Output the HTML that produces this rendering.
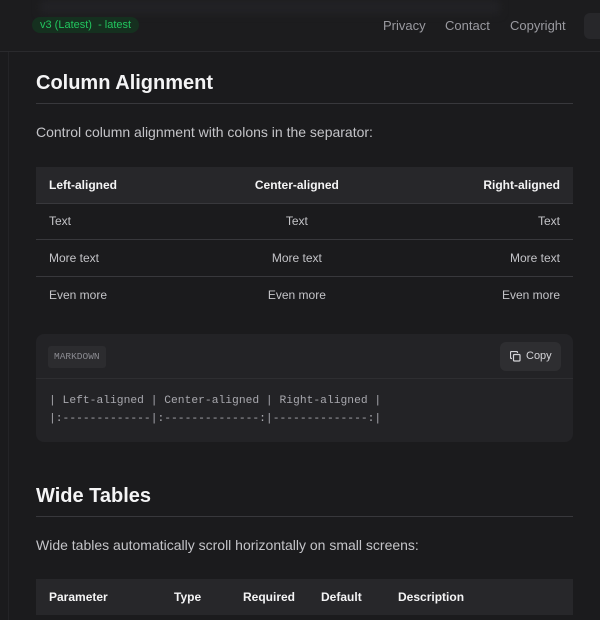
<!DOCTYPE html>
<html><head><style>
*{box-sizing:border-box;margin:0;padding:0}
body{width:600px;height:620px;overflow:hidden;background:#1b1b1d;font-family:"Liberation Sans",sans-serif;color:#d4d4d8;position:relative}
.side{position:absolute;left:8px;top:0;bottom:0;border-left:1px solid #242427}
.top{position:absolute;left:0;top:0;width:600px;height:52px;border-bottom:1px solid #2a2a2d;background:#1c1c1e}
.blur{position:absolute;top:0;left:40px;width:460px;height:14px;background:#222225;filter:blur(4px)}
.badge{position:absolute;left:32px;top:17px;height:16px;padding:0 8px;border-radius:8px;background:#15301f;color:#22c55e;font-size:11px;line-height:16px}
.nav{position:absolute;top:18px;font-size:13px;color:#9a9aa0}
.btn{position:absolute;left:584px;top:13px;width:40px;height:26px;border-radius:6px;background:#27272a}
h2{position:absolute;left:36px;font-size:20px;font-weight:bold;color:#f4f4f5;width:537px;border-bottom:1px solid #38383c;padding-bottom:8px}
p{position:absolute;left:36px;font-size:14px;color:#c4c4c8}
table{position:absolute;left:36px;width:537px;border-collapse:collapse;font-size:12px}
th{background:#27272a;height:36px;color:#f4f4f5;font-size:12px;font-weight:bold;padding:0 13px}
td{height:36.5px;border-top:1px solid #38383c;padding:0 13px;color:#c4c4c8}
.code{position:absolute;left:36px;top:334px;width:537px;height:108px;background:#232326;border-radius:8px}
.ch{height:45px;border-bottom:1px solid #2e2e31;position:relative}
.lang{position:absolute;left:12px;top:12px;height:22px;padding:0 6px;background:#2c2c2f;border-radius:3px;font-family:"Liberation Mono",monospace;font-size:9.5px;line-height:22px;color:#8a8a90}
.copy{position:absolute;right:12px;top:8px;width:61px;height:29px;background:#2e2e31;border-radius:6px;font-size:11px;color:#d4d4d8;line-height:29px;padding-left:26px}
pre{font-family:"Liberation Mono",monospace;font-size:11.3px;line-height:18px;color:#a8a8ae;padding:13px 13px}
</style></head><body>
<div class="side"></div>
<div class="top"><div class="blur"></div>
<div class="badge">v3 (Latest)&nbsp; - latest</div>
<div class="nav" style="left:383px">Privacy</div>
<div class="nav" style="left:445px">Contact</div>
<div class="nav" style="left:510px">Copyright</div>
<div class="btn"></div></div>
<h2 style="top:72px">Column Alignment</h2>
<p style="top:124px">Control column alignment with colons in the separator:</p>
<table style="top:167px">
<tr><th style="text-align:left">Left-aligned</th><th style="text-align:center">Center-aligned</th><th style="text-align:right">Right-aligned</th></tr>
<tr><td>Text</td><td style="text-align:center">Text</td><td style="text-align:right">Text</td></tr>
<tr><td>More text</td><td style="text-align:center">More text</td><td style="text-align:right">More text</td></tr>
<tr><td>Even more</td><td style="text-align:center">Even more</td><td style="text-align:right">Even more</td></tr>
</table>
<div class="code"><div class="ch"><div class="lang">MARKDOWN</div>
<div class="copy"><svg style="position:absolute;left:10px;top:9px" width="11" height="11" viewBox="0 0 11 11" fill="none" stroke="#d4d4d8" stroke-width="1.2"><rect x="3.5" y="3.5" width="6.5" height="6.5" rx="1"/><path d="M2 7.5H1.5a1 1 0 0 1-1-1V1.5a1 1 0 0 1 1-1h5a1 1 0 0 1 1 1V2"/></svg>Copy</div></div>
<pre>| Left-aligned | Center-aligned | Right-aligned |
|:-------------|:--------------:|--------------:|</pre></div>
<h2 style="top:485px">Wide Tables</h2>
<p style="top:537px">Wide tables automatically scroll horizontally on small screens:</p>
<table style="top:579px">
<tr><th style="text-align:left;width:125px">Parameter</th><th style="text-align:left;width:69px">Type</th><th style="text-align:left;width:75px">Required</th><th style="text-align:left;width:77px">Default</th><th style="text-align:left">Description</th></tr>
</table>
</body></html>
